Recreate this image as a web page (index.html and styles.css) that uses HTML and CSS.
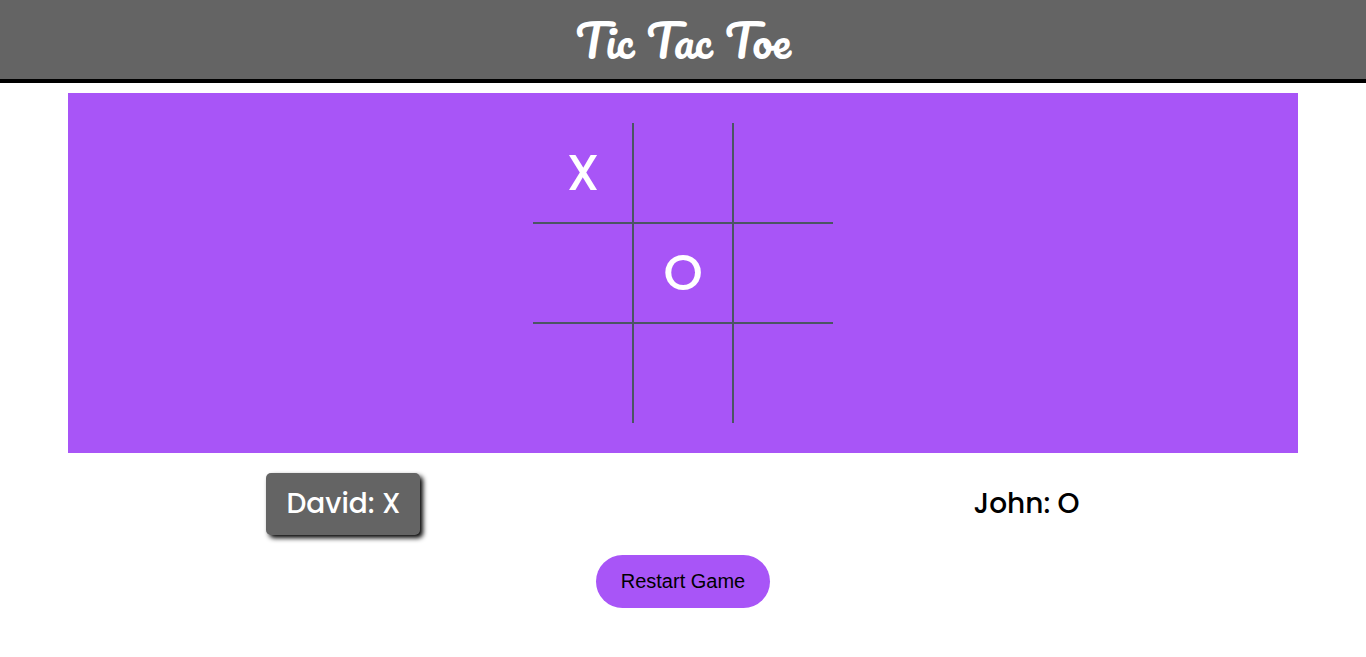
FILE: index.html
```html
<!DOCTYPE html>
<html lang="en">
<head>
  <meta charset="utf-8">
  <meta name="viewport" content="width=device-width, initial-scale=1">
  <title>Tic Tac Toe</title>
  <link rel="stylesheet" href="styles.css">
</head>
<body>
  <header class="header"><h1 class="title">Tic Tac Toe</h1></header>
  <main class="game">
    <section class="board-area">
      <div class="board">
        <button class="cell" type="button">X</button>
        <button class="cell" type="button"></button>
        <button class="cell" type="button"></button>
        <button class="cell" type="button"></button>
        <button class="cell" type="button">O</button>
        <button class="cell" type="button"></button>
        <button class="cell" type="button"></button>
        <button class="cell" type="button"></button>
        <button class="cell" type="button"></button>
      </div>
    </section>
    <section class="players">
      <p class="player active">David: X</p>
      <p class="player">John: O</p>
    </section>
    <button class="restart" type="button">Restart Game</button>
  </main>
</body>
</html>
```
FILE: styles.css
```css
* {
  box-sizing: border-box;
}

body {
  margin: 0;
  background: #fff;
  color: #000;
  font-family: Poppins, Inter, sans-serif;
}

.header {
  padding: 10px 0 9px;
  background: #646464;
  border-bottom: 4px solid #000;
  text-align: center;
}

.title {
  margin: 0;
  color: #fff;
  font-family: Pacifico, Lato, cursive;
  font-size: 45px;
  font-weight: 400;
  line-height: 60px;
}

.game {
  display: flex;
  flex-direction: column;
  align-items: center;
  gap: 20px;
  padding-top: 10px;
}

.board-area {
  display: flex;
  justify-content: center;
  width: 90%;
  padding: 30px;
  background: #a855f7;
}

.board {
  display: grid;
  grid-template-columns: repeat(3, 100px);
  grid-auto-rows: 100px;
  background:
    linear-gradient(#4b5563, #4b5563) 99px 0 / 2px 100% no-repeat,
    linear-gradient(#4b5563, #4b5563) 199px 0 / 2px 100% no-repeat,
    linear-gradient(#4b5563, #4b5563) 0 99px / 100% 2px no-repeat,
    linear-gradient(#4b5563, #4b5563) 0 199px / 100% 2px no-repeat;
}

.cell {
  padding: 0;
  border: 0;
  background: none;
  color: #fff;
  font-family: inherit;
  font-size: 50px;
  font-weight: 500;
  cursor: pointer;
}

.players {
  display: flex;
  justify-content: space-around;
  width: 100%;
}

.player {
  margin: 0;
  padding: 10px 20px;
  border-radius: 5px;
  font-size: 28px;
  font-weight: 500;
  line-height: 42px;
}

.active {
  background: #646464;
  box-shadow: 3px 3px 5px #000;
  color: #fff;
}

.restart {
  padding: 15px 25px;
  border: 0;
  border-radius: 30px;
  background: #a855f7;
  color: #000;
  font-family: "Liberation Sans", Arial, sans-serif;
  font-size: 20px;
  line-height: 23px;
  cursor: pointer;
}
```
